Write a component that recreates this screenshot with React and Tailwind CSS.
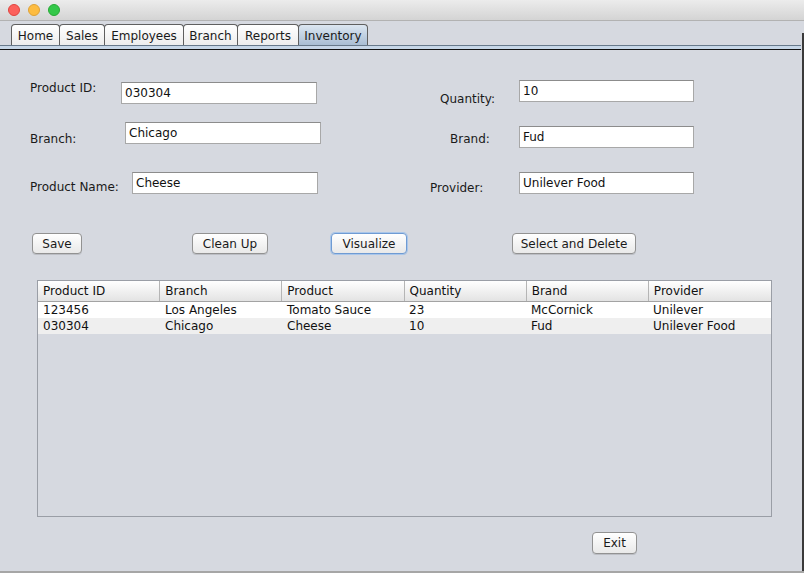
const tabs = [
  { name: "Home", w: "w-[49px]" },
  { name: "Sales", w: "w-[46px]" },
  { name: "Employees", w: "w-[80px]" },
  { name: "Branch", w: "w-[55px]" },
  { name: "Reports", w: "w-[62px]" },
  { name: "Inventory", w: "w-[70px]" },
];

const columns = ["Product ID", "Branch", "Product", "Quantity", "Brand", "Provider"];

const rows = [
  ["123456", "Los Angeles", "Tomato Sauce", "23", "McCornick", "Unilever"],
  ["030304", "Chicago", "Cheese", "10", "Fud", "Unilever Food"],
];

const Field = ({ value, className = "" }) => (
  <div
    className={`h-[22px] bg-white border border-[#a8a8a8] border-t-[#8c8c8c] flex items-center px-[3px] text-[12px] text-[#111] ${className}`}
  >
    {value}
  </div>
);

const Button = ({ children, className = "", focused = false }) => (
  <button
    className={`h-[21px] rounded-[4px] bg-gradient-to-b from-white to-[#e9e9e9] text-[12px] text-[#1a1a1a] flex items-center justify-center shadow-[0_1px_0_rgba(0,0,0,0.12)] ${
      focused
        ? "border border-[#6f9bd3] ring-1 ring-[#a9c6ea]"
        : "border border-[#929292]"
    } ${className}`}
  >
    {children}
  </button>
);

export default function App() {
  return (
    <div
      className="w-[804px] h-[573px] bg-[#d6d9e0] flex flex-col overflow-hidden relative"
      style={{ fontFamily: '"DejaVu Sans", "Liberation Sans", sans-serif' }}
    >
      {/* Title bar */}
      <div className="h-[21px] shrink-0 bg-gradient-to-b from-[#ececec] to-[#d4d4d4] border-b border-[#b2b2b2] flex items-center gap-[8px] pl-[8px]">
        <span className="w-[12px] h-[12px] rounded-full bg-[#fc605b] border border-[#e0443e]" />
        <span className="w-[12px] h-[12px] rounded-full bg-[#fdbc40] border border-[#dea236]" />
        <span className="w-[12px] h-[12px] rounded-full bg-[#34c84a] border border-[#27aa35]" />
      </div>

      {/* Tabs */}
      <div className="flex pl-[11px] pt-[3px] h-[24px] shrink-0 items-end">
        {tabs.map((t) => {
          const active = t.name === "Inventory";
          return (
            <div
              key={t.name}
              className={`${t.w} h-[21px] pt-[2px] flex items-center justify-center text-[12px] text-[#1a1a1a] border border-b-0 border-[#5f5f5f] rounded-t-[4px] -ml-px first:ml-0 ${
                active
                  ? "bg-gradient-to-b from-[#dce6f1] to-[#a9bed4]"
                  : "bg-gradient-to-b from-white to-[#ededed]"
              }`}
            >
              {t.name}
            </div>
          );
        })}
      </div>
      <div className="h-[5px] shrink-0 bg-[#c6d6e7] border-t border-[#67798b] border-b border-b-[#111] mr-[3px]" />

      {/* Form */}
      <div className="flex shrink-0">
        <div className="w-[400px] pl-[30px] pt-[30px] flex flex-col text-[12px] text-[#1a1a1a]">
          <div className="flex items-start h-[24px]">
            <span className="w-[91px] -mt-[1px]">Product ID:</span>
            <Field value="030304" className="w-[196px] mt-[2px]" />
          </div>
          <div className="flex items-start h-[22px] mt-[18px]">
            <span className="w-[95px] mt-[8px]">Branch:</span>
            <Field value="Chicago" className="w-[196px]" />
          </div>
          <div className="flex items-start h-[22px] mt-[28px]">
            <span className="w-[102px] mt-[6px]">Product Name:</span>
            <Field value="Cheese" className="w-[186px]" />
          </div>
        </div>
        <div className="flex flex-col pt-[30px] text-[12px] text-[#1a1a1a]">
          <div className="flex items-start h-[22px]">
            <span className="w-[119px] pl-[40px] mt-[10px]">Quantity:</span>
            <Field value="10" className="w-[175px]" />
          </div>
          <div className="flex items-start h-[22px] mt-[24px]">
            <span className="w-[119px] pl-[50px] mt-[4px]">Brand:</span>
            <Field value="Fud" className="w-[175px]" />
          </div>
          <div className="flex items-start h-[22px] mt-[24px]">
            <span className="w-[119px] pl-[30px] mt-[7px]">Provider:</span>
            <Field value="Unilever Food" className="w-[175px]" />
          </div>
        </div>
      </div>

      {/* Buttons */}
      <div className="flex mt-[39px] pl-[32px] shrink-0">
        <Button className="w-[50px]">Save</Button>
        <Button className="w-[76px] ml-[110px]">Clean Up</Button>
        <Button className="w-[76px] ml-[63px]" focused>
          Visualize
        </Button>
        <Button className="w-[124px] ml-[105px]">Select and Delete</Button>
      </div>

      {/* Table */}
      <div className="ml-[37px] mt-[26px] w-[735px] h-[237px] border border-[#9a9ea6] bg-[#d6d9e0] flex flex-col shrink-0 text-[12px] text-[#111]">
        <div className="flex h-[21px] bg-gradient-to-b from-white to-[#e3e3e3] border-b border-[#a3a3a3]">
          {columns.map((c, i) => (
            <div
              key={c}
              className={`flex-1 flex items-center pl-[5px] ${
                i < columns.length - 1 ? "border-r border-[#b5b5b5]" : ""
              }`}
            >
              {c}
            </div>
          ))}
          <div className="w-[1px]" />
        </div>
        {rows.map((r, ri) => (
          <div
            key={ri}
            className={`flex h-[16px] ${ri % 2 === 0 ? "bg-white" : "bg-[#efefef]"}`}
          >
            {r.map((cell, ci) => (
              <div key={ci} className="flex-1 flex items-center pl-[5px]">
                {cell}
              </div>
            ))}
            <div className="w-[1px]" />
          </div>
        ))}
      </div>

      {/* Exit */}
      <div className="flex pl-[592px] mt-[15px] shrink-0">
        <Button className="w-[45px] h-[22px]">Exit</Button>
      </div>

      <div className="absolute right-0 top-[33px] bottom-0 w-[2px] bg-[#3a3a3a]" />
      <div className="absolute left-0 right-0 bottom-0 h-[2px] bg-[#a6a6a6]" />
    </div>
  );
}
